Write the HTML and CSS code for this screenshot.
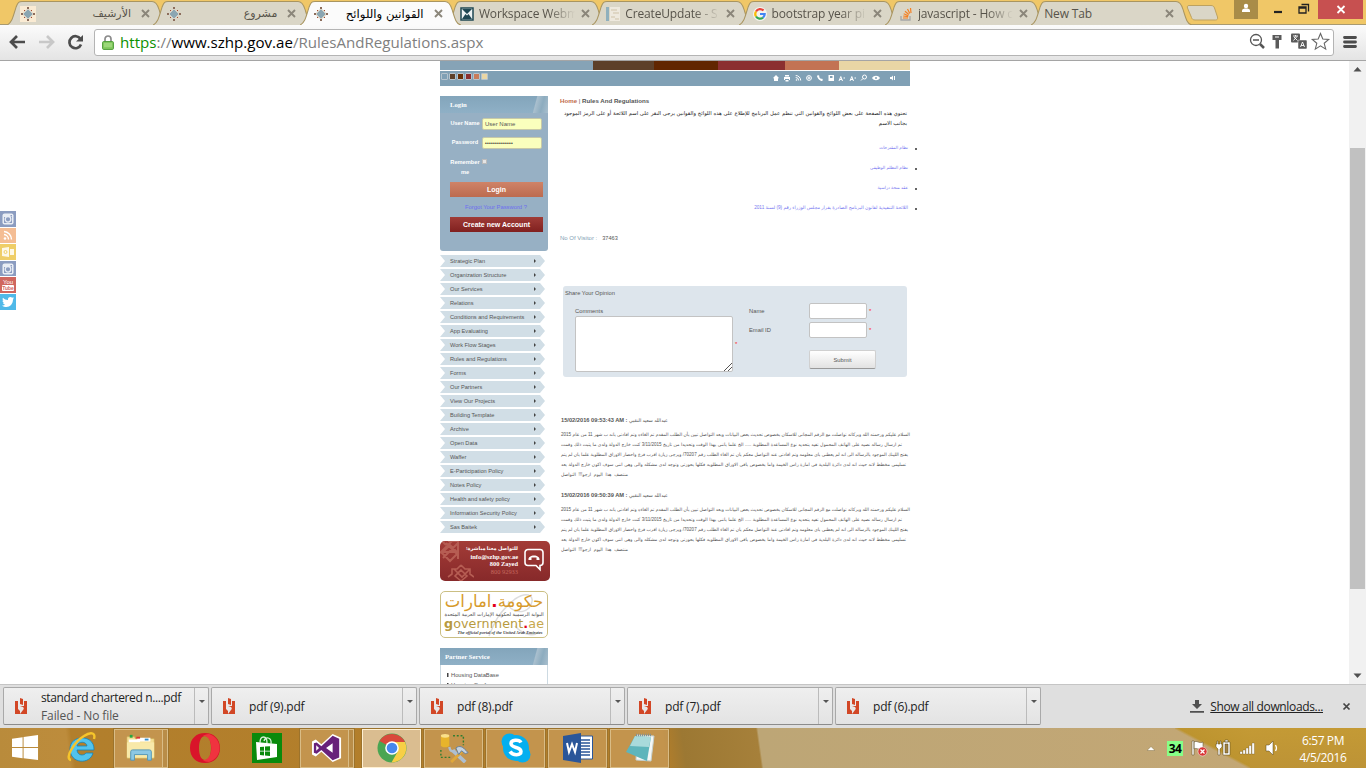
FILE: index.html
```html
<!DOCTYPE html>
<html lang="en">
<head>
<meta charset="utf-8">
<title>القوانين واللوائح</title>
<link rel="stylesheet" href="styles.css">
</head>
<body>
<svg class="defs" width="0" height="0">
  <symbol id="close" viewBox="0 0 9 9"><path d="M1 1l7 7M8 1l-7 7" stroke="#8b867a" stroke-width="1.900"/></symbol>
  <symbol id="fav" viewBox="0 0 14 14"><path d="M7 1l2 2h2v2l2 2-2 2v2h-2l-2 2-2-2H3V9L1 7l2-2V3h2z" fill="#d8d4c8"/><path d="M7 3L11 7 7 11 3 7z" fill="#8ba6b2" stroke="#8ba6b2"/><path d="M6 0h2v2H6zM6 12h2v2H6zM0 6h2v2H0zM12 6h2v2h-2z" fill="#8c6d5c"/><path d="M3 3h1v1H3zM10 3h1v1h-1zM3 10h1v1H3zM10 10h1v1h-1z" fill="#a8492c"/></symbol>
  <symbol id="tab" viewBox="0 0 161 24" preserveAspectRatio="none"><path d="M0 24C5 22 6 16 9 7 11 2 12 1.500 15 1.500H145C148 1.500 150 3 152 9 155 18 156 23 161 24"/></symbol>
  <symbol id="pdf" viewBox="0 0 12 17"><path d="M0 3h3v8l2 2v3H0zM5 0l3 1v6l-3-1zM9 3h3v13H5l3-4c1-1 1-2 0-3L5 8h4z" fill="#d24726"/></symbol>
  <symbol id="insta" viewBox="0 0 12 12"><rect x=".5" y=".5" width="11" height="11" rx="2" fill="#e9edf4"/><rect x="2" y="4" width="8" height="6" fill="#8b9cc0"/><circle cx="6" cy="6.300" r="2.800" fill="#8b9cc0" stroke="#e9edf4" stroke-width="1.300"/><path d="M8.500 2h1.500v1.500H8.500z" fill="#8b9cc0"/></symbol>
</svg>

<header class="tabstrip">
  <div class="tab rtl"><svg class="tab-bg"><use href="#tab"/></svg><span class="favbox"><svg class="fav"><use href="#fav"/></svg></span><span class="tab-title">الأرشيف</span><svg class="x"><use href="#close"/></svg></div>
  <div class="tab rtl"><svg class="tab-bg"><use href="#tab"/></svg><svg class="fav"><use href="#fav"/></svg><span class="tab-title">مشروع</span><svg class="x"><use href="#close"/></svg></div>
  <div class="tab rtl active"><svg class="tab-bg"><use href="#tab"/></svg><svg class="fav"><use href="#fav"/></svg><span class="tab-title">القوانين واللوائح</span><svg class="x"><use href="#close"/></svg></div>
  <div class="tab"><svg class="tab-bg"><use href="#tab"/></svg><svg class="fav" viewBox="0 0 14 14"><path d="M1 1h12v12H1z" fill="#eef3f3" stroke="#1f4853" stroke-width="1.500"/><path d="M2 2h10L7 7zM2 12l3.500-5L7 8.500 8.500 7 12 12z" fill="#1f4853"/></svg><span class="tab-title fade">Workspace Webm</span><svg class="x"><use href="#close"/></svg></div>
  <div class="tab"><svg class="tab-bg"><use href="#tab"/></svg><svg class="fav" viewBox="0 0 14 14"><path d="M0 0h3v14H0z" fill="#8fb0bd"/><path d="M4 0h10v14H4z" fill="#eee9de"/><path d="M5 3h6M7 6h6M5 10h4M9 12h4" stroke="#cfc3a9"/></svg><span class="tab-title fade">CreateUpdate - S</span><svg class="x"><use href="#close"/></svg></div>
  <div class="tab"><svg class="tab-bg"><use href="#tab"/></svg><svg class="fav" viewBox="0 0 14 14"><circle cx="7" cy="7" r="7" fill="#f5f3ee"/><g fill="none" stroke-width="2.200"><path d="M10.500 3.600A4.700 4.700 0 0 0 3 4.500" stroke="#e8453c"/><path d="M3 4.500a4.700 4.700 0 0 0 0 5" stroke="#fbbb05"/><path d="M3 9.500a4.700 4.700 0 0 0 7 1.100" stroke="#34a853"/><path d="M10 10.600A4.500 4.500 0 0 0 11.700 7H7" stroke="#4285f4"/></g></svg><span class="tab-title fade">bootstrap year pi</span><svg class="x"><use href="#close"/></svg></div>
  <div class="tab"><svg class="tab-bg"><use href="#tab"/></svg><svg class="fav" viewBox="0 0 14 14"><path d="M2 9v4h9V9" fill="none" stroke="#a5a6a8" stroke-width="1.300"/><path d="M4 11h5M4.200 9l5 .7M4.700 6.700l4.700 2M6 4.200L9.800 7.500M8.500 2l2.300 4.500M11.500 1l.5 5" stroke="#f48024" stroke-width="1.200"/></svg><span class="tab-title fade">javascript - How c</span><svg class="x"><use href="#close"/></svg></div>
  <div class="tab plain"><svg class="tab-bg"><use href="#tab"/></svg><span class="tab-title">New Tab</span><svg class="x"><use href="#close"/></svg></div>
  <svg class="newtab" viewBox="0 0 33 16"><path d="M3 .5h22c2 0 3 1 3.500 2.500l3 9c.5 2-.5 3-2 3H9c-2 0-3-1-3.500-2.500L1.500 3C1 1.500 1.500.5 3 .5z" fill="#dad6c7" stroke="#bda260"/></svg>
  <div class="winbtns">
    <svg class="user" viewBox="0 0 24 19"><circle cx="12" cy="6" r="2.200" fill="#fff"/><path d="M8 12V10.500C8 9 10 8.500 12 8.500s4 .5 4 2V12z" fill="#fff"/></svg>
    <svg class="minrest" viewBox="0 0 60 19"><path d="M16 12h8" stroke="#222" stroke-width="2.200"/><path d="M43.500 4.500h7v7M41 7h7v6h-7zM41 8h7" fill="none" stroke="#222" stroke-width="1.300"/></svg>
    <svg class="winclose" viewBox="0 0 45 19"><path d="M19.500 6l7 7M26.500 6l-7 7" stroke="#fff" stroke-width="1.800"/></svg>
  </div>
</header>

<div class="toolbar">
  <svg class="nav" viewBox="0 0 86 24"><g fill="none" stroke-width="2.700"><path d="M25 12H12M17 6l-6 6 6 6" stroke="#4c4c4c"/><path d="M39 12h13M47 6l6 6-6 6" stroke="#c8c8c8"/><path d="M80.500 9A6 6 0 1 0 81 14.500" stroke="#4c4c4c"/></g><path d="M83 5v6.500h-7z" fill="#4c4c4c"/></svg>
  <div class="omnibox">
    <svg class="lock" viewBox="0 0 12 15"><path d="M3 7V4a3 3 0 0 1 6 0v3" fill="none" stroke="#8b8b8b" stroke-width="1.700"/><rect x=".6" y="6.600" width="10.800" height="7.800" rx="1" fill="#85cb61" stroke="#4a9b35"/><path d="M2 9h8M2 11h8" stroke="#b2e392"/></svg>
    <span class="url"><span class="sec">https</span>://<span class="host">www.szhp.gov.ae</span>/RulesAndRegulations.aspx</span>
    <svg class="omni-icons" viewBox="0 0 84 20"><circle cx="8" cy="8" r="5.500" fill="none" stroke="#555" stroke-width="1.300"/><path d="M5 8h6" stroke="#555" stroke-width="1.500"/><path d="M12 12l4 4" stroke="#555" stroke-width="2.500"/><path d="M24.500 3h9v5h-2.500v8.500h-3.500V8h-3z" fill="#5a5a5a"/><path d="M27 5h4" stroke="#fff"/><rect x="43" y="1.500" width="9" height="9" rx="1" fill="#5a5a5a"/><rect x="50" y="8" width="9" height="9" rx="1" fill="#5a5a5a" stroke="#fff" stroke-width=".5"/><path d="M45 4h5M47.500 3v1.500M49 4.500l-3.500 4M46 5l3.500 3.500M52.500 15l2-5 2 5M53 13.500h3" stroke="#fff" fill="none" stroke-width=".9"/><path d="M72.500 1.500l2.300 5.500 5.900.4-4.500 3.900 1.500 5.800-5.200-3.200-5.200 3.200 1.500-5.800-4.500-3.900 5.900-.4z" fill="#fff" stroke="#666" stroke-width="1.100"/></svg>
  </div>
  <svg class="burger" viewBox="0 0 14 14"><path d="M1.500 2.500h11M1.500 7h11M1.500 11.500h11" stroke="#4c4c4c" stroke-width="2.800" stroke-linecap="round"/></svg>
</div>

<main class="viewport">
  <aside class="social">
    <div class="s-in"><svg viewBox="0 0 12 12"><use href="#insta"/></svg></div>
    <div class="s-rss"><svg viewBox="0 0 12 12"><circle cx="3" cy="9.500" r="1.300" fill="#fff"/><path d="M2 5.500a5 5 0 0 1 4.500 5M2 2.500a8 8 0 0 1 7.500 8" fill="none" stroke="#fff" stroke-width="1.400"/></svg></div>
    <div class="s-out"><svg viewBox="0 0 12 12"><path d="M0 2l7-1v10l-7-1zM8 3h4v6H8z" fill="#fff" opacity=".85"/><circle cx="3.500" cy="6" r="1.500" fill="none" stroke="#efce68"/></svg></div>
    <div class="s-in"><svg viewBox="0 0 12 12"><use href="#insta"/></svg></div>
    <div class="s-yt"><span>You</span><b>Tube</b></div>
    <div class="s-tw"><svg viewBox="0 0 12 12"><path d="M0 9.500c1.500 0 2.500-.3 3.200-1C2 8.500 1.300 7.800 1 7h1C1 6.500.5 5.500.5 4.500l1 .3C.5 4 .3 2.800 1 1.800 2.300 3.200 4 4 6 4c-.4-2 1-3 2.300-3 .8 0 1.400.3 1.800.8L11.700 1 11 2.500l1-.3-1 1.300C11 8 8 11 4.500 11 3 11 1.200 10.500 0 9.500z" fill="#fff"/></svg></div>
  </aside>

  <div class="site">
    <div class="sitenav"><i></i><i></i><i></i><i></i><i></i><i></i></div>
    <div class="utilbar">
      <div class="swatches"><i></i><i></i><i></i><i></i><i></i><i></i></div>
      <svg class="utilicons" viewBox="0 0 126 10"><g fill="#fff"><path d="M0 5l3-3 3 3-1 .5V8H1V5.500zM12 2h4v1.500h-4zM11 4h6v3h-1V6h-4v1h-1zM12.500 7h3v1.500h-3z"/><circle cx="23.500" cy="7" r=".8"/><path d="M45 2l1.500 1-.5 1 2 2 1-.5 1 1.500-1 1c-2 0-4.500-2.500-5-5zM55.500 2H61v6h-5.500z"/><path d="M99 5c2-3 6-3 8 0-2 3-6 3-8 0zM117 4h1.500L120 2.500v5L118.500 6H117z"/></g><g fill="none" stroke="#fff" stroke-width="1"><path d="M22.700 4.500a3 3 0 0 1 3 3M22.700 2.500a5 5 0 0 1 5 5"/><circle cx="36" cy="5" r="2.400"/><circle cx="36" cy="5" r=".9"/><path d="M66 8l1.800-4.500L69.500 8M66.500 6.500h2.500M70.500 5H72M77 8l1.800-4.500L80.500 8M77.500 6.500H80M81.500 5H83"/><circle cx="91.500" cy="4" r="2"/><path d="M90 5.500L88 7.500M121.500 3v4"/></g><circle cx="103" cy="5" r="1" fill="#80a0b5"/><path d="M57 3h2.500v2H57z" fill="#80a0b5"/></svg>
    </div>
    <div class="columns">
      <div class="side">
        <section class="login">
          <h2>Login</h2>
          <label class="field"><span>User Name</span><span class="inp">User Name</span></label>
          <label class="field"><span>Password</span><span class="inp dots">••••••••••••••</span></label>
          <div class="remember"><span>Remember<br>me</span><i></i></div>
          <div class="btn">Login</div>
          <a class="forgot">Forgot Your Password ?</a>
          <div class="btn dark">Create new Account</div>
        </section>
        <nav class="menu">
          <a>Strategic Plan</a><a>Organization Structure</a><a>Our Services</a><a>Relations</a><a>Conditions and Requirements</a><a>App Evaluating</a><a>Work Flow Stages</a><a>Rules and Regulations</a><a>Forms</a><a>Our Partners</a><a>View Our Projects</a><a>Building Template</a><a>Archive</a><a>Open Data</a><a>Waffer</a><a>E-Participation Policy</a><a>Notes Policy</a><a>Health and safety policy</a><a>Information Security Policy</a><a>Sas Baitek</a>
        </nav>
        <div class="contact">
          <svg class="pattern" viewBox="0 0 34 40"><g fill="none" stroke="#b65d53"><path d="M2 0l4 4M12 0L0 12M6 2l12 12M18 2L3 17M8 0h10v18M2 11h17M10 4l8 8-8 8-8-8z" stroke-width="2"/><path d="M21 24l4 4h5v5l4 3M21 24l-4 4h-5v5l-4 3M14 28l8 8 8-8M21 29l6 6-6 5-6-5z" stroke-width="1.600"/></g></svg>
          <div class="contact-text"><b>للتواصل معنا مباشرة!</b><b>info@szhp.gov.ae</b><b>800 Zayed</b><span>800 92933</span></div>
          <svg class="phone" viewBox="0 0 20 24"><path d="M4 1.500h12a3 3 0 0 1 3 3v10a3 3 0 0 1-3 3v4l-4-4H4a3 3 0 0 1-3-3v-10a3 3 0 0 1 3-3z" fill="none" stroke="#fff" stroke-width="1.600"/><path d="M4.500 12c-1-6 12-6 11 0h-3v-2.500h-5V12z" fill="#fff"/></svg>
        </div>
        <div class="gov">
          <svg class="swirl" viewBox="0 0 50 46"><path d="M2 44C8 30 10 22 28 7 42-2 50 5 42 16c-8 8-24 1-20-7M28 34c7 8 16 10 21 8" fill="none" stroke="#ddd" stroke-width="1.500"/></svg>
          <div class="gov-ar">حكومة<i>.</i>امارات</div>
          <div class="gov-sub">البوابة الرسمية لحكومة الإمارات العربية المتحدة</div>
          <div class="gov-en"><b>g</b>overnment<i>.</i><em>ae</em></div>
          <div class="gov-foot">The official portal of the United Arab Emirates</div>
        </div>
        <section class="partner"><h2>Partner Service</h2><a>Housing DataBase</a><a>Housing Conference</a></section>
      </div>

      <article class="content">
        <div class="crumb"><b>Home</b> <u>|</u> Rules And Regulations</div>
        <div class="intro"><p>تحتوي هذه الصفحة على بعض اللوائح والقوانين التي تنظم عمل البرنامج للإطلاع على هذه اللوائح والقوانين يرجى النقر على اسم اللائحة أو على الرمز الموجود</p><p class="last">بجانب الاسم</p></div>
        <ul class="rules"><li>نظام المقترحات</li><li>نظام التظلم الوظيفي</li><li>عقد منحة دراسية</li><li class="long">اللائحة التنفيذية لقانون البرنامج الصادرة بقرار مجلس الوزراء رقم (9) لسنة 2011</li></ul>
        <div class="visitors">No Of Visitor :<span>37463</span></div>
        <form class="opinion">
          <h3>Share Your Opinion</h3>
          <div class="oprow">
            <div class="ocomm"><label>Comments</label><div class="areawrap"><div class="area"><svg viewBox="0 0 8 8"><path d="M0 8l8-8M4 8l4-4" stroke="#555"/></svg></div><em>*</em></div></div>
            <div class="ofields"><div><label>Name</label><span class="box"></span><em>*</em></div><div><label>Email ID</label><span class="box"></span><em>*</em></div><div class="submit">Submit</div></div>
          </div>
        </form>
        <section class="post">
          <h4>15/02/2016 09:53:43 AM : <span>عبدالله سعيد النقبي</span></h4>
          <p class="a">السلام عليكم ورحمته الله وبركاته تواصلت مع الرقم المجاني للاسكان بخصوص تحديث بعض البيانات وبعد التواصل تبين بأن الطلب المقدم تم الغاءه وتم افادتي بانه ب شهر 11 من عام 2015</p>
          <p class="b">تم ارسال رساله نصيه على الهاتف المحمول تفيد بتحديد نوع المساعدة المطلوبة ..... الخ علما بانني بهذا الوقت وتحديدا من تاريخ 3/11/2015 كنت خارج الدولة ولدي ما يثبت ذلك وقمت</p>
          <p class="c">بفتح اللينك الموجود بالرساله الى انه لم يعطني باي معلومه وتم افادتي عند التواصل معكم بان تم الغاء الطلب رقم 70207/ ويرجى زيارة اقرب فرع واحضار الاوراق المطلوبة علما بان لم يتم</p>
          <p class="d">تسليمي مخطط لانه حيث انه لدى دائرة البلدية في امارة راس الخيمة واما بخصوص باقي الاوراق المطلوبه فكلها بحوزتي وتوجد لدي مشكله والى وهي انني سوف اكون خارج الدولة بعد</p>
          <p class="e">منتصف هذا اليوم ارجو!!! التواصل</p>
        </section>
        <section class="post">
          <h4>15/02/2016 09:50:39 AM : <span>عبدالله سعيد النقبي</span></h4>
          <p class="a">السلام عليكم ورحمته الله وبركاته تواصلت مع الرقم المجاني للاسكان بخصوص تحديث بعض البيانات وبعد التواصل تبين بأن الطلب المقدم تم الغاءه وتم افادتي بانه ب شهر 11 من عام 2015</p>
          <p class="b">تم ارسال رساله نصيه على الهاتف المحمول تفيد بتحديد نوع المساعدة المطلوبة ..... الخ علما بانني بهذا الوقت وتحديدا من تاريخ 3/11/2015 كنت خارج الدولة ولدي ما يثبت ذلك وقمت</p>
          <p class="c">بفتح اللينك الموجود بالرساله الى انه لم يعطني باي معلومه وتم افادتي عند التواصل معكم بان تم الغاء الطلب رقم 70207/ ويرجى زيارة اقرب فرع واحضار الاوراق المطلوبة علما بان لم يتم</p>
          <p class="d">تسليمي مخطط لانه حيث انه لدى دائرة البلدية في امارة راس الخيمة واما بخصوص باقي الاوراق المطلوبه فكلها بحوزتي وتوجد لدي مشكله والى وهي انني سوف اكون خارج الدولة بعد</p>
          <p class="e">منتصف هذا اليوم ارجو!!! التواصل</p>
        </section>
      </article>
    </div>
  </div>

  <div class="scrollbar"><svg viewBox="0 0 17 17"><path d="M4.500 10.500l4-4.500 4 4.500z" fill="#505050"/></svg><div class="thumb"></div><svg viewBox="0 0 17 17"><path d="M4.500 6.500l4 4.500 4-4.500z" fill="#505050"/></svg></div>
</main>

<div class="downloads">
  <div class="dl"><svg class="pdf"><use href="#pdf"/></svg><div class="dlt two"><span>standard chartered n....pdf</span><small>Failed - No file</small></div><i></i></div>
  <div class="dl"><svg class="pdf"><use href="#pdf"/></svg><div class="dlt">pdf (9).pdf</div><i></i></div>
  <div class="dl"><svg class="pdf"><use href="#pdf"/></svg><div class="dlt">pdf (8).pdf</div><i></i></div>
  <div class="dl"><svg class="pdf"><use href="#pdf"/></svg><div class="dlt">pdf (7).pdf</div><i></i></div>
  <div class="dl"><svg class="pdf"><use href="#pdf"/></svg><div class="dlt">pdf (6).pdf</div><i></i></div>
  <div class="showall"><svg class="dlicon" viewBox="0 0 14 13"><path d="M5 0h4v4h3L7 9 2 4h3zM0 11h14v1.800H0z" fill="#505050"/></svg><a>Show all downloads...</a><svg class="dlx" viewBox="0 0 9 9"><path d="M1.500 1.500l6 6M7.500 1.500l-6 6" stroke="#444" stroke-width="1.700"/></svg></div>
</div>

<footer class="taskbar">
  <svg class="start" viewBox="0 0 28 28"><path d="M0 4.500l11-1.700V13H0zM12 2.700L27 .5V13H12zM0 14h11v10.500L0 23zM12 14h15v12.500l-15-2z" fill="#fff"/></svg>
  <svg class="ie" viewBox="0 0 30 32"><path d="M27 18H10c.5 6 7 6 9 3h7c-3 12-23 11-23-4C3 2 28 2 27 18zM10 14h10c-.5-5-9-5-10 0z" fill="#52c3ed" stroke="#1583b8" stroke-width=".8"/><path d="M4 28C-3 27 7 10 17 4c6-4 12-4 10 3" fill="none" stroke="#f6c52b" stroke-width="2.400"/></svg>
  <div class="task stack explorer"><svg viewBox="0 0 32 30"><path d="M1 3h8l1 2h20v21H1z" fill="#f4df94" stroke="#cdb05a" stroke-width=".6"/><path d="M3 6h12v3H3zM12 4h14v4H12z" fill="#fff"/><path d="M4 1h3v3H4z" fill="#28a745"/><path d="M11 3h4v2h-4z" fill="#d33"/><path d="M20 5h4v2h-4z" fill="#3590cf"/><path d="M1 9h29v16H1z" fill="#f8e9a9"/><path d="M5 28v-9q0-2 2-2h18q2 0 2 2v9h-4v-6H9v6z" fill="#8cc8e4" stroke="#5295b6"/></svg></div>
  <svg class="opera" viewBox="0 0 30 30"><path fill-rule="evenodd" d="M15 0C6 0 0 6 0 15s6 15 15 15 15-6 15-15S24 0 15 0zm0 3c4 0 6 5 6 12s-2 12-6 12-6-5-6-12 2-12 6-12z" fill="#d9142a"/><path d="M19 1c14 4 14 24 0 28-3 0-5-1-6-2 11 1 11-25 0-24 1-1 3-2 6-2z" fill="#f0333f"/></svg>
  <svg class="store" viewBox="0 0 30 30"><path d="M0 0h30v30H0z" fill="#0a8a0c"/><path d="M4 9l21 2v13L5 27z" fill="#fff"/><path d="M8 10c0-8 7-8 7 0M12 8c1-5 8-4 7 3" fill="none" stroke="#d9f1d9" stroke-width="1.300"/><path d="M8 14l4-.3v4H8zM13 13.600l5-.3v4.400h-5zM8 18.600h4v3.800l-4-.4zM13 18.600h5v4.300l-5-.4z" fill="#0a8a0c"/></svg>
  <div class="task stack vs"><svg viewBox="0 0 32 30"><path d="M22 0l9 4v22l-9 4-12-11-6 5-4-2V8l4-2 6 5z" fill="#fff"/><path d="M22 2l7 3v20l-7 3L10 17l-5 4-3-1V10l3-1 5 4zM22 10l-7 5 7 5zM4.500 12v6l3-3z" fill="#68217a" fill-rule="evenodd"/></svg></div>
  <div class="task on"><svg viewBox="0 0 30 30"><circle cx="15" cy="15" r="14.500" fill="#4aa552"/><path d="M15 15L2.500 8A14.500 14.500 0 0 1 28 9z" fill="#d9483b"/><path d="M15 9h13a14.500 14.500 0 0 1-13.500 20.500L21 18z" fill="#f7cf45"/><circle cx="15" cy="15" r="6.800" fill="#fff"/><circle cx="15" cy="15" r="5.300" fill="#4787ed"/></svg></div>
  <div class="task"><svg viewBox="0 0 32 32"><path d="M2 3v10c0 3 9 3 9 0V3z" fill="#e8b42b"/><ellipse cx="6.500" cy="3" rx="4.500" ry="2" fill="#fae08a"/><path d="M15 3h11v10M2 18v8h11" stroke="#2f7d32" stroke-width="1.500" stroke-dasharray="2 2" fill="none"/><path d="M15 19l13 12" stroke="#aebfd0" stroke-width="4"/><path d="M27 17L13 31" stroke="#e0a83a" stroke-width="3"/><path d="M18 16c4-3 7-2 13 5l-3 1-4-3-3 4z" fill="#c5d2df" stroke="#637d99"/><path d="M11 15c1 5 3 5 6 3" stroke="#aebfd0" fill="none" stroke-width="2.500"/></svg></div>
  <div class="task"><svg viewBox="0 0 30 30"><circle cx="15" cy="15" r="13" fill="#04aff0"/><circle cx="8.500" cy="8.500" r="8" fill="#04aff0"/><circle cx="21.500" cy="21.500" r="8" fill="#04aff0"/><path d="M20 9.500c-2-3.500-10-3-10 1 0 5 10 3 10 8 0 4-8 4.500-11 0" fill="none" stroke="#fff" stroke-width="3.500"/></svg></div>
  <div class="task"><svg viewBox="0 0 30 30"><path d="M17 3h12.500v23H17z" fill="#fff" stroke="#2a5699"/><path d="M18 7h9M18 10h9M18 13h9M18 16h9M18 19h9M18 22h9" stroke="#2a5699" stroke-width="1.400"/><path d="M0 3l18-3v30L0 27z" fill="#2a5699"/><path d="M4 10l2 9 3-8 3 8 2-9" fill="none" stroke="#fff" stroke-width="2"/></svg></div>
  <div class="task"><svg viewBox="0 0 30 30"><path d="M12 2l17 1-3 25-15-1z" fill="#f4f7f6" stroke="#c4cfcd"/><path d="M10 3l16 1-4 24L1 19z" fill="#5eb5bb"/><path d="M10 3l16 1-2 10L5 13z" fill="#a9dadb"/><path d="M11 2h16" stroke="#86918f" stroke-width="2.500" stroke-dasharray="1 1"/></svg></div>
  <div class="tray">
    <svg class="caret" viewBox="0 0 10 6"><path d="M0 5.500l5-5 5 5z" fill="#fff" stroke="#6e5a2b" stroke-width=".5"/></svg>
    <span class="num">34</span>
    <svg class="tricons" viewBox="0 0 90 18"><g stroke="#57451c" stroke-width=".5"><path d="M1 2h2v14H1zM3 3c3-2 5 2 9 0v7c-4 2-6-2-9 0z" fill="#fff"/><circle cx="11.500" cy="12.500" r="4.500" fill="#d93636" stroke="#fff"/><path d="M32 3h7v13h-7zM34 1h3v2h-3zM25 5h1V2h1v3h2V2h1v3h1v3l-2 2v6h-2v-6l-2-2z" fill="#fff"/><path d="M34 5h3v9h-3z" fill="#a28243"/><path d="M49 12.500h2.400V15H49zM52 11h2.400v4H52zM55 9h2.400v6H55zM58 6.500h2.400V15H58zM61 4h2.400v11H61z" fill="#fff" stroke-width=".3"/><path d="M75 6h3l4-4v14l-4-4h-3z" fill="#fff"/></g><path d="M9.500 10.500l4 4M13.500 10.500l-4 4" stroke="#fff" stroke-width="1.300"/><path d="M84.500 6q2 3 0 6" stroke="#fff" fill="none" stroke-width="1.300"/></svg>
    <div class="clock">6:57 PM<br>4/5/2016</div>
  </div>
</footer>
</body>
</html>
```
FILE: styles.css
```css
* { box-sizing: border-box; }
body { margin: 0; width: 1366px; height: 768px; overflow: hidden; background: #fff; font-family: "Open Sans", "DejaVu Sans", sans-serif; display: flex; flex-direction: column; }
svg { display: block; flex: none; }
.defs { position: absolute; }
h2, h3, h4, p, ul { margin: 0; padding: 0; }
i, em { font-style: normal; }

.tabstrip { height: 25px; flex: none; display: flex; align-items: flex-start; background: #f0c767; padding-left: 7px; border-bottom: 1px solid #a99a70; }
.tab { position: relative; width: 161px; height: 24px; margin-right: -14.700px; flex: none; display: flex; align-items: center; padding: 3px 11px 0 14px; font-size: 12px; letter-spacing: -.150px; color: #57534a; }
.tab-bg { position: absolute; left: 0; top: 0; width: 161px; height: 25px; fill: #dad6c7; stroke: #a99560; stroke-width: 1; }
.tab.active { z-index: 2; color: #000; }
.active .tab-bg { fill: #fbfbfb; }
.fav { position: relative; width: 14px; height: 14px; flex: none; }
.favbox { position: relative; background: #faebd3; padding: 1px; margin-left: -1px; margin-right: -1px; }
.tab-title { position: relative; flex: 1; margin: 0 3px 0 5px; white-space: nowrap; }
.tab.plain .tab-title { margin-left: 5px; }
.tab.plain { padding-left: 8px; }
.rtl .tab-title { direction: rtl; margin-right: 10px; font-family: "DejaVu Sans", sans-serif; font-size: 11px; letter-spacing: 0; }
.rtl.active .tab-title { font-size: 11.700px; }
.fade { -webkit-mask-image: linear-gradient(90deg, #000 70%, transparent 97%); mask-image: linear-gradient(90deg, #000 70%, transparent 97%); }
.x { position: relative; width: 9px; height: 9px; margin-right: 7px; }
.newtab { width: 33px; height: 16px; margin: 5px 0 0 8px; }
.winbtns { display: flex; margin-left: auto; margin-right: 3px; }
.user { width: 24px; height: 19px; background: #a98c48; }
.minrest { width: 60px; height: 19px; }
.winclose { width: 45px; height: 19px; background: #c75050; }

.toolbar { height: 36px; flex: none; display: flex; align-items: center; padding-bottom: 1px; background: linear-gradient(#fbfbfb, #e4e4e4); border-bottom: 1px solid #a5a5a5; }
.nav { width: 86px; height: 24px; }
.omnibox { margin-left: 8px; width: 1240px; height: 27px; border: 1px solid #b4b4b4; border-radius: 3px; background: #fff; display: flex; align-items: center; padding: 0 1px 0 7px; }
.lock { width: 12px; height: 15px; }
.url { margin-left: 6px; font-size: 15.100px; line-height: 24px; color: #808080; white-space: nowrap; }
.sec { color: #0b9000; }
.host { color: #000; }
.omni-icons { width: 84px; height: 20px; margin-left: auto; }
.burger { width: 14px; height: 14px; margin-left: 9px; }

.viewport { height: 623px; flex: none; display: flex; justify-content: space-between; align-items: flex-start; overflow: hidden; font-family: "Liberation Sans", "DejaVu Sans", sans-serif; font-size: 6px; color: #555; }
.social { width: 16px; margin-right: 424px; margin-top: 150px; flex: none; }
.social div { height: 15.700px; margin-bottom: .9px; display: flex; flex-direction: column; align-items: center; justify-content: center; }
.social svg { width: 12px; height: 12px; }
.s-in { background: #8b9cc0; }
.s-rss { background: #f4bd94; }
.s-out { background: #efce68; }
.s-yt { background: #d0675f; color: #fff; font-size: 6px; line-height: 6px; }
.s-yt b { background: #fff; color: #d0675f; font-size: 5px; border-radius: 1px; }
.s-tw { background: #50b9e8; }
.site { width: 470px; flex: none; }
.sitenav { display: flex; height: 9px; margin-bottom: 1px; }
.sitenav i { background: #86a3b6; width: 153px; }
.sitenav i:nth-child(2) { background: #5d4029; width: 61px; }
.sitenav i:nth-child(3) { background: #612600; width: 64px; }
.sitenav i:nth-child(4) { background: #8b2f30; width: 67px; }
.sitenav i:nth-child(5) { background: #c37354; width: 54px; }
.sitenav i:nth-child(6) { background: #e9d6a5; width: 71px; }
.utilbar { height: 15px; background: #80a0b5; display: flex; justify-content: space-between; padding: 0 11px 0 1px; }
.swatches { display: flex; gap: 1px; padding-top: 1.500px; }
.swatches i { width: 7px; height: 7px; border: 1px solid #b5c3cd; border-radius: 1px; background: #80a0b5; }
.swatches i:nth-child(2) { background: #5d4029; }
.swatches i:nth-child(3) { background: #6b3107; }
.swatches i:nth-child(4) { background: #8b2f30; }
.swatches i:nth-child(5) { background: #c97c5b; }
.swatches i:nth-child(6) { background: #e9d6a5; }
.utilicons { width: 126px; height: 10px; margin-top: 2px; }
.columns { display: flex; gap: 10px; padding-top: 10px; }
.side { width: 110px; flex: none; }

.login { width: 108px; height: 155px; background: #97b0c4; border-radius: 0 0 3px 3px; color: #fff; font-weight: bold; }
.login h2, .partner h2 { height: 17px; padding-left: 10px; font: bold 6.700px/17px "Liberation Serif", serif; color: #fff; background: linear-gradient(105deg, transparent 86%, #a9bfce 87%, #8dacbf 93%, #a9bfce), linear-gradient(#83a5bb, #8fb0c6); }
.field { display: flex; align-items: center; height: 12px; margin-top: 5px; padding-left: 10px; }
.field + .field { margin-top: 7px; }
.field > span:first-child { width: 30px; text-align: center; margin-right: 2px; margin-top: -2px; white-space: nowrap; font-size: 5.600px; }
.inp { width: 60px; height: 12px; background: #faffbd; border: 1px solid #c7c9a8; border-radius: 2px; padding-left: 2px; color: #555; font-weight: normal; line-height: 10px; white-space: nowrap; }
.field .dots { font-size: 5px; color: #333; letter-spacing: .250px; }
.remember { display: flex; align-items: flex-start; padding-left: 10px; margin-top: 8px; line-height: 10px; font-size: 5.700px; }
.remember span { width: 30px; text-align: center; margin-right: 2px; }
.remember i { width: 5px; height: 5px; flex: none; background: #e5e5e5; border: 1px solid #bbb; margin-top: 2px; }
.btn { width: 93px; height: 15px; margin: 5px 0 0 10px; line-height: 15px; text-align: center; font-size: 7px; background: linear-gradient(#cf8367, #bc6b50); }
.forgot { display: block; height: 20px; margin-bottom: -5px; padding-left: 25px; line-height: 20px; font-size: 5.800px; font-weight: normal; color: #6d6df0; }
.btn.dark { background: linear-gradient(#a03c37, #80201f); }

.menu { padding-top: 4px; display: flex; flex-direction: column; gap: 2px; font-size: 5.650px; }
.menu a { position: relative; width: 105px; height: 12px; line-height: 12px; padding-left: 10px; background: #d1dee6; clip-path: polygon(0 0, 100px 0, 105px 50%, 100px 100%, 0 100%, 5px 50%); white-space: nowrap; }
.menu a::after { content: ""; position: absolute; left: 94px; top: 4px; border: 2px solid transparent; border-left: 2.500px solid #444; border-right: 0; }

.contact { margin-top: 8px; height: 40px; width: 110px; border-radius: 5px; background: linear-gradient(#a33c37, #87292a); display: flex; color: #fff; overflow: hidden; }
.pattern { width: 34px; height: 40px; }
.contact-text { width: 44px; padding-top: 4px; text-align: right; display: flex; flex-direction: column; align-items: flex-end; font: 6.400px/7.700px "Liberation Serif", "DejaVu Sans", serif; white-space: nowrap; }
.contact-text b:first-child { font-size: 5px; direction: rtl; }
.contact-text span { color: #c5695f; }
.phone { width: 20px; height: 24px; margin: 7px 0 0 6px; }
.gov { position: relative; margin-top: 10px; width: 108px; height: 47px; border: 1px solid #cbbf83; border-radius: 5px; text-align: center; white-space: nowrap; overflow: hidden; }
.swirl { position: absolute; left: 46px; top: 0; width: 50px; height: 46px; }
.gov-ar { position: relative; direction: rtl; font: 16.500px/19px "DejaVu Sans", sans-serif; color: #d79a2b; }
.gov i { color: #e2001a; font-weight: bold; }
.gov-sub { position: relative; direction: rtl; font: 5px/7px "DejaVu Sans", sans-serif; color: #444; }
.gov-en { position: relative; font: 12.700px/12px "DejaVu Sans", sans-serif; color: #b89a3e; letter-spacing: .1px; }
.gov-en em { color: #c7a84d; }
.gov-foot { position: relative; font: italic bold 4.400px/6px "Liberation Serif", serif; color: #444; padding-left: 12px; }
.partner { margin-top: 10px; width: 108px; height: 50px; border: 1px solid #cddae2; border-top: 0; font-size: 5.750px; }
.partner h2 { margin: 0 -1px 5px; padding-left: 5px; }
.partner a { display: block; line-height: 10px; padding-left: 10px; background: linear-gradient(#444, #444) 6px 3px / 1.500px 4px no-repeat; }

.content { width: 350px; flex: none; }
.crumb { height: 10px; line-height: 10px; font-weight: bold; font-size: 6.150px; }
.crumb b { color: #c0694a; }
.crumb u { text-decoration: none; font-weight: normal; }
.intro { direction: rtl; padding: 2px 3px 0 4px; font-size: 5.250px; color: #222; line-height: 10px; }
.intro p, .post p { height: 10px; text-align: justify; text-align-last: justify; white-space: nowrap; }
.intro .last { text-align-last: start; font-size: 5.500px; }
.rules { direction: rtl; list-style: none; margin: 10px -8px 0 0; color: #7777f0; font-size: 4.300px; }
.rules .long { font-size: 4.700px; }
.rules li { height: 20px; line-height: 20px; display: flex; align-items: center; }
.rules li::before { content: ""; width: 2px; height: 2px; background: #666; margin: 2px 1px 0 7px; }
.visitors { height: 20px; line-height: 20px; margin-top: 10px; color: #7fa0b4; }
.visitors span { color: #555; margin-left: 5px; font-size: 5.600px; }
.opinion { margin: 38px 0 0 3px; width: 344px; height: 91px; border-radius: 3px; background: #dde5ec; padding: 2px; font-size: 5.800px; }
.opinion h3 { font-size: 5.750px; font-weight: normal; line-height: 10px; }
.opinion em { color: #f22; font-size: 6px; }
.oprow { display: flex; padding: 5px 0 0 10px; }
.ocomm { width: 174px; padding-top: 2px; }
.ocomm label { display: block; height: 11px; line-height: 12px; }
.areawrap { display: flex; align-items: center; gap: 2px; }
.area { width: 158px; height: 56px; border: 1px solid #c3c3c3; border-radius: 2px; background: #fff; display: flex; align-items: flex-end; justify-content: flex-end; }
.area svg { width: 8px; height: 8px; }
.ofields > div:not(.submit) { display: flex; height: 19px; align-items: center; margin-top: -1.500px; margin-bottom: 1.500px; }
.ofields label { width: 60px; }
.box { width: 58px; height: 16px; border: 1px solid #c3c3c3; border-radius: 2px; background: #fff; margin-right: 2px; }
.submit { width: 67px; height: 19px; margin: 10px 0 0 60px; line-height: 18px; text-align: center; background: linear-gradient(#fff, #e2e2e2); border: 1px solid #d0d0d0; border-bottom-color: #999; border-radius: 2px; }
.post { padding-left: 1px; font-size: 4.550px; line-height: 10px; height: 75px; }
.opinion + .post { margin-top: 38px; }
.post h4 { font-size: 5.700px; height: 15px; line-height: 10px; white-space: nowrap; }
.post h4 span { display: inline-block; direction: rtl; font-size: 4.800px; font-weight: normal; }
.post p { direction: rtl; width: 349px; }
.post .b { width: 341px; }
.post .c { width: 347px; }
.post .d { width: 345px; }
.post .e { width: 67px; }

.scrollbar { width: 17px; height: 623px; margin-left: auto; background: #f1f1f1; display: flex; flex-direction: column; flex: none; }
.scrollbar svg { width: 17px; height: 17px; }
.thumb { width: 15px; height: 441px; margin: 70px auto auto; background: #c1c1c1; }

.downloads { height: 44px; flex: none; background: #dfdfdf; border-top: 1px solid #c5c5c5; display: flex; align-items: flex-start; padding: 2px 0 0 3px; gap: 2px; font-size: 12px; color: #222; }
.dl { width: 206px; height: 38px; flex: none; border: 1px solid #a9a9a9; border-bottom-color: #8c8c8c; border-radius: 2px; background: linear-gradient(#efefef, #e3e3e3); display: flex; align-items: center; }
.pdf { width: 12px; height: 17px; margin-left: 11px; }
.dlt { flex: 1; margin-left: 14px; letter-spacing: -.2px; white-space: nowrap; }
.dlt.two { line-height: 18px; letter-spacing: -.370px; padding-top: 2px; }
.dlt small { display: block; font-size: 12px; color: #555; letter-spacing: -.1px; }
.dl i { width: 14px; height: 36px; border-left: 1px solid #bbb; display: flex; justify-content: center; }
.dl i::after { content: ""; margin-top: 12px; height: 0; border: 3px solid transparent; border-top-color: #555; border-bottom: 0; }
.showall { margin-left: auto; display: flex; align-items: center; height: 38px; padding-right: 15px; }
.dlicon { width: 14px; height: 13px; margin-right: 6px; }
.showall a { text-decoration: underline; letter-spacing: -.350px; white-space: nowrap; }
.dlx { width: 9px; height: 9px; margin-left: 19px; }

.taskbar { height: 40px; flex: none; display: flex; align-items: center; background: linear-gradient(#c49a35, #bd9336) 1250px 0 / 116px 40px no-repeat, linear-gradient(to top right, transparent 48%, #bd942f 52%, #c49a35) 1175px 0 / 75px 40px no-repeat, linear-gradient(82deg, #b98b3b 0, #bd8c3c 70px, #b27f2c 75px, #b37e2a 660px, #9c7833 680px, #a6803a 754px, #bda676 756px, #c3a775 1250px); }
.start { width: 27px; height: 28px; margin-left: 12px; }
.ie { width: 30px; height: 32px; margin-left: 28px; }
.task { width: 59px; height: 39px; margin-right: 3px; border: 1px solid #d9bc86; background: rgba(215,175,120,.45); box-shadow: 0 0 0 1px #9c732c; display: flex; align-items: center; justify-content: center; flex: none; }
.task svg { width: 30px; height: 30px; }
.stack { width: 54px; border-right: 1px solid #d9bc86; box-shadow: inset -4px 0 #b98d48, inset -5px 0 #d9bc86, 0 0 0 1px #9c732c; }
.explorer { margin: 0 22px 0 17px; width: 54px; }
.opera, .store { width: 30px; height: 30px; margin-right: 32px; }
.store { margin-right: 18px; }
.vs { margin-right: 8px; width: 54px; }
.on { background: #dabd90; border-color: #fff0d2; }
.tray { display: flex; align-items: center; margin-left: auto; margin-right: 18px; color: #fff; }
.caret { width: 8px; height: 5px; margin-right: 12px; }
.num { width: 16px; height: 15px; background: #87ff87; color: #000; font: bold 12px/15px "Open Sans", sans-serif; letter-spacing: -.5px; text-align: center; }
.tricons { width: 90px; height: 18px; margin-left: 8px; }
.clock { width: 50px; margin-left: 17px; padding-top: 2px; font-size: 12px; line-height: 17px; text-align: center; letter-spacing: -.4px; white-space: nowrap; }
```
